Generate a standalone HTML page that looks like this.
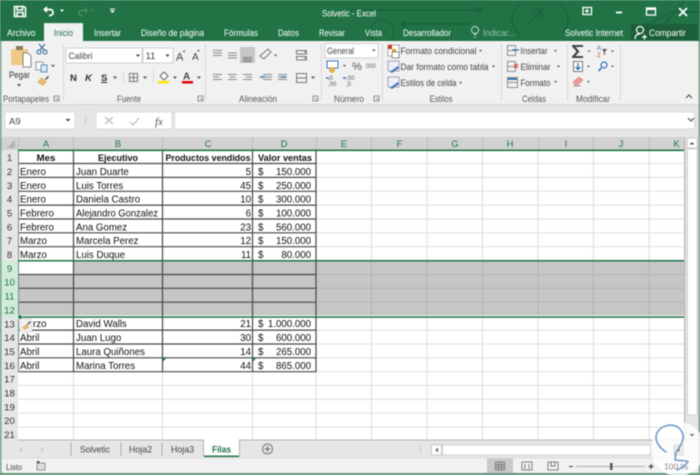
<!DOCTYPE html>
<html lang="es"><head><meta charset="utf-8"><title>Solvetic - Excel</title>
<style>
html,body{margin:0;padding:0;background:#e6e6e6;width:700px;height:475px;overflow:hidden}
svg{display:block;filter:blur(.4px)}
text{font-family:"Liberation Sans",sans-serif;font-size:9.6px;fill:#222}
.t text,.t{fill:#fff}
.c text{fill:#111;font-size:9.7px}
.h text{font-weight:bold;fill:#111;font-size:9.6px;text-anchor:middle}
.e text{text-anchor:end}
.n text{text-anchor:middle;fill:#333;font-size:9.6px}
.ch text{text-anchor:middle;fill:#217346;font-size:9.5px}
.l text{fill:#555;font-size:9px;text-anchor:middle}
</style></head><body>
<svg width="700" height="475" viewBox="0 0 700 475" xmlns="http://www.w3.org/2000/svg">
<rect width="700" height="475" fill="#e6e6e6"/>
<!-- title bar -->
<rect width="700" height="41" fill="#217346"/>
<g fill="none" stroke="#1b633b" stroke-width="1.5">
<path d="M350 10H480M400 24H470M520 4a18 18 0 0 0 0 30M560 4a18 18 0 0 1 0 30M528 24l14-14m-9 0h9v9M640 30l30-18h30M660 30l25-30"/><circle cx="382" cy="32" r="12"/><circle cx="404" cy="24" r="2"/><circle cx="480" cy="10" r="2"/>
</g>
<!-- QAT -->
<g fill="none" stroke="#fff" stroke-width="1.600"><path d="M14.500 6.500h9.500l1.500 1.500V16.500h-11zM17 6.500v3.500h5.500V6.500M17 16.500v-4h6v4"/><path d="M47 7l-2.500 2.500 2.500 2.500M44.500 9.500h5.500c4 0 4 6 0 6h-1" stroke-width="1.800"/></g>
<path d="M60 9.500h4l-2 2.500z" fill="#fff"/>
<g fill="none" stroke="#4c9068" stroke-width="1.400"><path d="M85 8l2 2.500-2 2.500M86.500 10.500h-5c-3.500 0-3.500 5 0 5h1"/></g>
<path d="M91 9.500h3l-1.500 2z" fill="#4c9068"/>
<path d="M110 8.500h5v1h-5zM110 10.500h5l-2.500 2.500z" fill="#fff"/>
<g class="t">
<text x="322" y="16.500" textLength="54" lengthAdjust="spacingAndGlyphs" fill="#fff">Solvetic - Excel</text>
<text x="7" y="36" textLength="28.500" lengthAdjust="spacingAndGlyphs">Archivo</text>
<text x="94" y="36" textLength="27" lengthAdjust="spacingAndGlyphs">Insertar</text>
<text x="141" y="36" textLength="63" lengthAdjust="spacingAndGlyphs">Diseño de página</text>
<text x="224" y="36" textLength="34" lengthAdjust="spacingAndGlyphs">Fórmulas</text>
<text x="278" y="36" textLength="21" lengthAdjust="spacingAndGlyphs">Datos</text>
<text x="319" y="36" textLength="26" lengthAdjust="spacingAndGlyphs">Revisar</text>
<text x="365" y="36" textLength="17" lengthAdjust="spacingAndGlyphs">Vista</text>
<text x="403" y="36" textLength="48" lengthAdjust="spacingAndGlyphs">Desarrollador</text>
<text x="565" y="36" textLength="58" lengthAdjust="spacingAndGlyphs">Solvetic Internet</text>
</g>
<text x="483" y="36" textLength="32" lengthAdjust="spacingAndGlyphs" style="fill:#9cc4ad">Indicar...</text>
<g fill="none" stroke="#b9d6c5" stroke-width="1"><circle cx="475" cy="30" r="3.500"/><path d="M473.500 34.500h3M474 37h2"/></g>
<!-- window buttons -->
<g fill="none" stroke="#fff" stroke-width="1.300"><rect x="583" y="7.500" width="8.500" height="7"/><path d="M585 11h4M587 9v4"/><rect x="646.500" y="8" width="9" height="7"/><path d="M646.500 9h9" stroke-width="2"/><path d="M679 8l8 8M687 8l-8 8" stroke-width="1.800"/><path d="M616 12.500h6" stroke-width="1.800"/></g>
<rect x="631" y="24" width="66" height="16" fill="#1b5e37"/>
<g fill="none" stroke="#fff" stroke-width="1.200"><circle cx="640" cy="30" r="3.500"/><path d="M635 39c0-3.500 2-5 5-5M642 37h5M644.500 34.500v5"/></g>
<text x="649" y="36" textLength="37" lengthAdjust="spacingAndGlyphs" style="fill:#fff">Compartir</text>
<!-- Ribbon -->
<rect x="0" y="41" width="700" height="63" fill="#f1f1f1"/>
<rect x="0" y="104" width="700" height="1" fill="#d4d4d4"/>
<path d="M44 41V24.500q0-1 1-1h37q1 0 1 1V41z" fill="#f1f1f1"/>
<rect x="44" y="23" width="39" height="1" fill="#d8e6dd"/>
<text x="54" y="36" textLength="19" lengthAdjust="spacingAndGlyphs" style="fill:#217346">Inicio</text>
<!-- separators -->
<g fill="#d8d8d8"><rect x="63" y="44" width="1" height="57"/><rect x="205" y="44" width="1" height="57"/><rect x="321" y="44" width="1" height="57"/><rect x="382" y="44" width="1" height="57"/><rect x="501" y="44" width="1" height="57"/><rect x="567" y="44" width="1" height="57"/><rect x="620" y="44" width="1" height="57"/></g>
<!-- group labels -->
<g class="l">
<text x="26" y="102" textLength="46" lengthAdjust="spacingAndGlyphs">Portapapeles</text>
<text x="129" y="102" textLength="24" lengthAdjust="spacingAndGlyphs">Fuente</text>
<text x="258" y="102" textLength="38" lengthAdjust="spacingAndGlyphs">Alineación</text>
<text x="349" y="102" textLength="30" lengthAdjust="spacingAndGlyphs">Número</text>
<text x="441" y="102" textLength="23" lengthAdjust="spacingAndGlyphs">Estilos</text>
<text x="534" y="102" textLength="24" lengthAdjust="spacingAndGlyphs">Celdas</text>
<text x="593" y="102" textLength="34" lengthAdjust="spacingAndGlyphs">Modificar</text>
</g>
<g fill="none" stroke="#777" stroke-width=".8"><path d="M54 96h5v5h-5zM198 96h5v5h-5zM313 96h5v5h-5zM374 96h5v5h-5zM56 98l2 2M200 98l2 2M315 98l2 2M376 98l2 2"/></g>
<!-- Clipboard -->
<path d="M11 49h6v-2h5v2h6v16H11z" fill="#f0c987"/><rect x="16" y="46" width="7" height="4" fill="#8a7a60"/>
<path d="M23 53h5l3 3v11h-8z" fill="#fff" stroke="#666" stroke-width=".8"/>
<text x="9" y="78" textLength="21" lengthAdjust="spacingAndGlyphs" style="fill:#333">Pegar</text>
<path d="M17 84h4l-2 2.500z" fill="#444"/>
<g fill="none" stroke="#2f5f8f" stroke-width="1"><circle cx="39" cy="52" r="2"/><circle cx="45" cy="52" r="2"/><path d="M40 50l5-6M44 50l-5-6"/></g>
<rect x="36" y="62" width="7" height="8" fill="#fff" stroke="#777" stroke-width=".8"/><rect x="41" y="65" width="6" height="7" fill="#dce8f4" stroke="#3b75ae" stroke-width=".8"/><path d="M51 65h4l-2 2z" fill="#444"/>
<path d="M37 82l5-5 5 5-4 4z" fill="#e3b96e"/><path d="M45 79l3-3 1 1-3 3z" fill="#444"/>
<!-- Font -->
<rect x="66" y="48" width="76" height="15" fill="#fff" stroke="#d0d0d0"/><rect x="143" y="48" width="30" height="15" fill="#fff" stroke="#d0d0d0"/>
<text x="68.500" y="59" textLength="24" lengthAdjust="spacingAndGlyphs" style="fill:#444">Calibri</text>
<text x="145.500" y="59" style="fill:#444">11</text>
<path d="M136 54.500h4l-2 2.500zM165.500 54.500h4l-2 2.500z" fill="#444"/>
<text x="176" y="60.500" style="font-size:11px;fill:#444">A</text><text x="192" y="60" style="font-size:10px;fill:#444">A</text>
<path d="M184 50l1.500 2h-3zM197 50h3l-1.500 2z" fill="#2f6eb0"/>
<text x="70" y="81" style="font-weight:bold;fill:#333">N</text><text x="85" y="81" style="font-weight:bold;font-style:italic;fill:#333">K</text><text x="101" y="81" style="font-weight:bold;fill:#333;text-decoration:underline">S</text>
<path d="M113 76.500h4l-2 2.500zM143 76.500h4l-2 2.500zM173 76.500h4l-2 2.500zM197 76.500h4l-2 2.500z" fill="#555"/>
<rect x="123" y="72" width="1" height="11" fill="#d8d8d8"/><rect x="153" y="70" width="1" height="13" fill="#d8d8d8"/>
<g fill="none" stroke="#777"><rect x="129.500" y="73.500" width="8" height="8"/><path d="M133.500 73.500v8M129.500 77.500h8"/></g>
<path d="M160 76l4-4 4 4-4 4z" fill="#fff" stroke="#666"/><rect x="158" y="81" width="11" height="2.500" fill="#ffe800"/>
<text x="183" y="79.500" style="font-size:10px;fill:#444;font-weight:bold">A</text><rect x="182" y="81" width="11" height="2.500" fill="#e00000"/>
<!-- Align -->
<g stroke="#8a8a8a" stroke-width="1"><path d="M213 50.500h9M213 53h9M213 55.500h9M228 53h9M228 55.500h9M228 58h9"/>
<path d="M213 74.500h9M213 77h6M213 79.500h9M228 74.500h9M230 77h5M228 79.500h9M243 74.500h9M246 77h6M243 79.500h9M263 74.500h9M263 77h9M263 79.500h9M278 74.500h9M278 77h9M278 79.500h9"/></g>
<rect x="240" y="47" width="15" height="16" fill="#c6c6c6"/><path d="M243 57.500h9M243 59.500h9M243 61.500h9" stroke="#777"/>
<path d="M260 56l8-7 3 3-7 7z" fill="none" stroke="#777"/><path d="M274 54.500h3l-1.500 2z" fill="#555"/>
<path d="M260 77h5M281 77h5" stroke="#3778b5" stroke-width="1.500"/>
<g fill="none" stroke="#777"><rect x="296.500" y="50.500" width="10" height="3.500"/><rect x="296.500" y="56.500" width="10" height="3.500"/><rect x="296.500" y="73.500" width="10" height="9"/><path d="M296.500 78h10M299 78h5"/></g>
<path d="M304 52h3M304 58h3" stroke="#3778b5"/><path d="M311 76.500h4l-2 2.500z" fill="#555"/>
<!-- Number -->
<rect x="325" y="43.500" width="53" height="14.500" fill="#fff" stroke="#d0d0d0"/>
<text x="327" y="54" textLength="27" lengthAdjust="spacingAndGlyphs" style="fill:#444">General</text>
<path d="M372 49.500h3.500l-1.700 2z" fill="#555"/>
<rect x="327" y="61" width="11" height="7" fill="#fff" stroke="#3778b5"/><circle cx="332" cy="70" r="3" fill="#e7b04f"/><path d="M343 65h3l-1.500 2z" fill="#555"/>
<text x="352" y="70" style="font-size:11px;fill:#555">%</text>
<text x="366" y="68" style="font-size:6px;fill:#666">000</text>
<text x="328" y="80" style="font-size:6px;fill:#555">,0</text><text x="328" y="86" style="font-size:6px;fill:#555">,00</text>
<text x="346" y="80" style="font-size:6px;fill:#555">,00</text><text x="346" y="86" style="font-size:6px;fill:#555">,0</text>
<path d="M326 78h3M343 78h3" stroke="#3778b5" stroke-width="1.500"/>
<!-- Styles -->
<text x="400.500" y="54" textLength="76" lengthAdjust="spacingAndGlyphs" style="fill:#444">Formato condicional</text>
<text x="400.500" y="70" textLength="88" lengthAdjust="spacingAndGlyphs" style="fill:#444">Dar formato como tabla</text>
<text x="400.500" y="86" textLength="56" lengthAdjust="spacingAndGlyphs" style="fill:#444">Estilos de celda</text>
<path d="M479 50h3l-1.500 2zM492 65.500h3l-1.500 2zM459 82h3l-1.500 2z" fill="#555"/>
<rect x="388" y="45" width="11" height="11" fill="#fff" stroke="#888" stroke-width=".7"/><rect x="388" y="45" width="4" height="4" fill="#c0392b"/><rect x="392" y="49" width="4" height="4" fill="#e6962e"/><rect x="392" y="52" width="7" height="6" fill="#fff" stroke="#666" stroke-width=".7"/>
<rect x="388" y="61" width="11" height="10" fill="#eef" stroke="#888" stroke-width=".7"/><path d="M390 72l8-6 1 2-7 5z" fill="#3778b5"/>
<rect x="388" y="77" width="11" height="10" fill="#eef" stroke="#888" stroke-width=".7"/><path d="M390 88l8-6 1 2-7 5z" fill="#3778b5"/>
<!-- Cells -->
<text x="520.500" y="54" textLength="27" lengthAdjust="spacingAndGlyphs" style="fill:#444">Insertar</text>
<text x="520.500" y="70" textLength="30" lengthAdjust="spacingAndGlyphs" style="fill:#444">Eliminar</text>
<text x="520.500" y="86" textLength="30" lengthAdjust="spacingAndGlyphs" style="fill:#444">Formato</text>
<path d="M554 50h3l-1.500 2zM557 65.500h3l-1.500 2zM554 81h3l-1.500 2z" fill="#555"/>
<g fill="none" stroke="#777" stroke-width=".8"><rect x="507.500" y="45.500" width="8" height="10"/><rect x="507.500" y="61.500" width="8" height="10"/><rect x="507.500" y="77.500" width="10" height="10"/><path d="M507.500 50.500h8M507.500 66.500h8M507.500 82.500h10"/></g>
<path d="M512 50h7" stroke="#3778b5" stroke-width="1.500"/><path d="M514 64l4 4M518 64l-4 4" stroke="#d8402d" stroke-width="1.200"/><rect x="508" y="78" width="9" height="2" fill="#3778b5"/>
<!-- Edit -->
<path d="M572 45h11v2h-7.500l4 4.500-4 4.500H583v2h-11v-1.500l4.500-5-4.500-5z" fill="#444"/>
<path d="M587.500 50.500h3l-1.500 2zM587 65.500h3l-1.500 2zM587 81h3l-1.500 2zM611 50.500h3l-1.500 2zM611 65.500h3l-1.500 2z" fill="#666"/>
<text x="597" y="50" style="font-size:6px;fill:#2f6eb0">A</text><text x="597" y="57" style="font-size:6px;fill:#d8402d">Z</text><path d="M602 49h5l-2 3v3h-1v-3z" fill="#555"/>
<rect x="573.500" y="61.500" width="9" height="10" fill="#fff" stroke="#777"/><path d="M578 63v6m-2.500-2l2.500 2.500 2.500-2.500" stroke="#2f6eb0" fill="none" stroke-width="1.300"/>
<circle cx="604" cy="65" r="3" fill="none" stroke="#2f6eb0" stroke-width="1.200"/><path d="M601.500 68l-3 3" stroke="#2f6eb0" stroke-width="1.500"/>
<path d="M573 82l6-5 4 3-5 5h-3z" fill="#e99" stroke="#c66" stroke-width=".5"/><path d="M573 86h8" stroke="#999"/>
<path d="M686 98l3-3 3 3" fill="none" stroke="#555" stroke-width="1.200"/>
<!-- Formula bar -->
<rect x="5" y="112" width="70" height="17" fill="#fff" stroke="#dcdcdc"/>
<text x="9" y="124.500" style="fill:#444">A9</text><path d="M65.500 119h5l-2.500 2.500z" fill="#444"/>
<g fill="#aaa"><rect x="85" y="117" width="1" height="1.200"/><rect x="85" y="120" width="1" height="1.200"/><rect x="85" y="123" width="1" height="1.200"/></g>
<rect x="96" y="112" width="76" height="17" fill="#fff" stroke="#dcdcdc"/>
<rect x="174.500" y="112" width="520" height="17" fill="#fff" stroke="#dcdcdc"/>
<path d="M105 117l8 7M113 117l-8 7M130 122l3 3 6-7" stroke="#bbb" stroke-width="1.200" fill="none"/>
<text x="155" y="125" style="font-family:'Liberation Serif',serif;font-style:italic;font-size:11px;fill:#555">fx</text>
<path d="M688 118l3 3 3-3" fill="none" stroke="#555" stroke-width="1.200"/>
<!-- Grid -->
<rect x="18" y="150" width="666" height="290" fill="#fff"/>
<rect x="0" y="137" width="684" height="13" fill="#d2d2d2"/>
<rect x="0" y="150" width="18" height="290" fill="#e6e6e6"/>
<path d="M7 148l8-8v8z" fill="#b4b4b4"/>
<rect x="1.500" y="261" width="16.500" height="56" fill="#d0ecd9"/>
<g fill="#bdbdbd"><rect x="18" y="137" width="1" height="13"/><rect x="73" y="137" width="1" height="13"/><rect x="162" y="137" width="1" height="13"/><rect x="252" y="137" width="1" height="13"/><rect x="316" y="137" width="1" height="13"/><rect x="371" y="137" width="1" height="13"/><rect x="427" y="137" width="1" height="13"/><rect x="482" y="137" width="1" height="13"/><rect x="538" y="137" width="1" height="13"/><rect x="593" y="137" width="1" height="13"/><rect x="649" y="137" width="1" height="13"/></g>
<!-- gridlines -->
<g stroke="#e2e2e2" stroke-width="1.200">
<path d="M316 163.500H684M316 177.400H684M316 191.300H684M316 205.100H684M316 219H684M316 232.800H684M316 246.700H684M316 330.100H684M316 344H684M316 357.800H684M316 371.700H684M18 385.500H684M18 399.400H684M18 413.200H684M18 427.100H684"/>
<path d="M371.500 150V261M371.500 317V440M427 150V261M427 317V440M482.500 150V261M482.500 317V440M538 150V261M538 317V440M593.500 150V261M593.500 317V440M649 150V261M649 317V440M73.500 372V440M162.500 372V440M252.500 372V440M316 372V440"/>
</g>
<!-- selected -->
<rect x="19" y="261" width="665" height="55" fill="#c6c6c6"/>
<rect x="19" y="261" width="54" height="13.500" fill="#fff"/>
<g stroke="#b3b3b3" stroke-width="1"><path d="M316 274.500H684M316 288.300H684M316 302.200H684M371.500 261V316M427 261V316M482.500 261V316M538 261V316M593.500 261V316M649 261V316"/></g>
<rect x="18" y="315.300" width="666" height="1" fill="#fff"/>
<!-- cell borders -->
<g stroke="#474747" stroke-width="1.200">
<path d="M18 163.500H316M18 177.400H316M18 191.300H316M18 205.100H316M18 219H316M18 232.800H316M18 246.700H316M18 274.500H316M18 288.300H316M18 302.200H316M18 330.100H316M18 344H316M18 357.800H316M18 371.700H316"/>
<path d="M73.500 150V372M162.500 150V372M252.500 150V372M316 150V372"/>
</g>
<path d="M18.500 150V372" stroke="#6a8f78" stroke-width="1"/>
<rect x="18" y="149.500" width="666" height="1.600" fill="#217346"/>
<rect x="18" y="260" width="666" height="1.500" fill="#217346"/>
<rect x="18" y="316.300" width="666" height="1.500" fill="#217346"/>
<rect x="18" y="315" width="4" height="4" fill="#217346" stroke="#fff" stroke-width=".5"/>
<path d="M163 358.500h3l-3 3zM253 358.500h3l-3 3z" fill="#0a8a2c"/>
<!-- col headers -->
<g class="ch"><text x="46" y="147">A</text><text x="118" y="147">B</text><text x="208" y="147">C</text><text x="284" y="147">D</text><text x="344" y="147">E</text><text x="399.500" y="147">F</text><text x="455" y="147">G</text><text x="510" y="147">H</text><text x="566" y="147">I</text><text x="621" y="147">J</text><text x="676.500" y="147">K</text></g>
<!-- row headers -->
<g class="n"><text x="9.500" y="161">1</text><text x="9.500" y="174.900">2</text><text x="9.500" y="188.800">3</text><text x="9.500" y="202.600">4</text><text x="9.500" y="216.500">5</text><text x="9.500" y="230.300">6</text><text x="9.500" y="244.200">7</text><text x="9.500" y="258">8</text>
<text x="9.500" y="271.900" style="fill:#217346">9</text><text x="9.500" y="285.700" style="fill:#217346">10</text><text x="9.500" y="299.600" style="fill:#217346">11</text><text x="9.500" y="313.400" style="fill:#217346">12</text>
<text x="9.500" y="327.300">13</text><text x="9.500" y="341.100">14</text><text x="9.500" y="355">15</text><text x="9.500" y="368.800">16</text><text x="9.500" y="382.700">17</text><text x="9.500" y="396.500">18</text><text x="9.500" y="410.400">19</text><text x="9.500" y="424.200">20</text><text x="9.500" y="438.100">21</text></g>
<!-- header cells -->
<g class="h"><text x="46" y="161" textLength="19" lengthAdjust="spacingAndGlyphs">Mes</text><text x="118" y="161" textLength="40" lengthAdjust="spacingAndGlyphs">Ejecutivo</text><text x="208" y="161" textLength="85" lengthAdjust="spacingAndGlyphs">Productos vendidos</text><text x="285" y="161" textLength="54" lengthAdjust="spacingAndGlyphs">Valor ventas</text></g>
<!-- cells -->
<g class="c">
<text x="20" y="174.900">Enero</text><text x="20" y="188.800">Enero</text><text x="20" y="202.600">Enero</text><text x="20" y="216.500">Febrero</text><text x="20" y="230.300">Febrero</text><text x="20" y="244.200">Marzo</text><text x="20" y="258">Marzo</text>
<text x="33" y="327.200">rzo</text><text x="20" y="341.100">Abril</text><text x="20" y="354.900">Abril</text><text x="20" y="368.800">Abril</text>
<text x="76" y="174.900">Juan Duarte</text><text x="76" y="188.800">Luis Torres</text><text x="76" y="202.600">Daniela Castro</text><text x="76" y="216.500" textLength="82" lengthAdjust="spacingAndGlyphs">Alejandro Gonzalez</text><text x="76" y="230.300">Ana Gomez</text><text x="76" y="244.200">Marcela Perez</text><text x="76" y="258">Luis Duque</text>
<text x="76" y="327.200">David Walls</text><text x="76" y="341.100">Juan Lugo</text><text x="76" y="354.900">Laura Quiñones</text><text x="76" y="368.800">Marina Torres</text>
<text x="258" y="174.900">$</text><text x="258" y="188.800">$</text><text x="258" y="202.600">$</text><text x="258" y="216.500">$</text><text x="258" y="230.300">$</text><text x="258" y="244.200">$</text><text x="258" y="258">$</text><text x="258" y="327.200">$</text><text x="258" y="341.100">$</text><text x="258" y="354.900">$</text><text x="258" y="368.800">$</text>
</g>
<g class="c e">
<text x="251" y="174.900">5</text><text x="251" y="188.800">45</text><text x="251" y="202.600">10</text><text x="251" y="216.500">6</text><text x="251" y="230.300">23</text><text x="251" y="244.200">12</text><text x="251" y="258">11</text><text x="251" y="327.200">21</text><text x="251" y="341.100">30</text><text x="251" y="354.900">14</text><text x="251" y="368.800">44</text>
<text x="311" y="174.900">150.000</text><text x="311" y="188.800">250.000</text><text x="311" y="202.600">300.000</text><text x="311" y="216.500">100.000</text><text x="311" y="230.300">560.000</text><text x="311" y="244.200">150.000</text><text x="311" y="258">80.000</text><text x="311" y="327.200">1.000.000</text><text x="311" y="341.100">600.000</text><text x="311" y="354.900">265.000</text><text x="311" y="368.800">865.000</text>
</g>
<!-- paste options -->
<rect x="20" y="319" width="12" height="13" fill="#f2f2f2" stroke="#d0d0d0" stroke-width=".7"/>
<path d="M21.500 328l5-4 3 3-4 3z" fill="#e3b96e"/><path d="M27 324l3-3 1 1-3 3z" fill="#555"/>
<!-- vertical scrollbar -->
<rect x="684" y="137" width="16" height="303" fill="#e6e6e6"/>
<rect x="684" y="137" width="1.500" height="303" fill="#bdbdbd"/>
<rect x="687.500" y="138" width="9.500" height="10" fill="#fff" stroke="#bbb" stroke-width=".7"/>
<path d="M689.500 144.500h5l-2.500-2.500z" fill="#555"/>
<!-- sheet tabs -->
<rect x="0" y="440" width="700" height="18" fill="#e6e6e6"/>
<rect x="18" y="439.500" width="682" height="1" fill="#b5b5b5"/>
<path d="M22 448l-2 2 2 2M41 448l2 2-2 2" fill="none" stroke="#c0c0c0"/>
<g fill="#a8a8a8"><rect x="70.500" y="443" width="1" height="13"/><rect x="120.500" y="443" width="1" height="13"/><rect x="161.500" y="443" width="1" height="13"/></g>
<text x="80" y="452.500" textLength="30" lengthAdjust="spacingAndGlyphs" style="fill:#444">Solvetic</text>
<text x="129" y="452.500" textLength="23" lengthAdjust="spacingAndGlyphs" style="fill:#444">Hoja2</text>
<text x="171" y="452.500" textLength="23" lengthAdjust="spacingAndGlyphs" style="fill:#444">Hoja3</text>
<rect x="203.500" y="439.500" width="36" height="17" fill="#fff"/><rect x="203" y="439.500" width="1" height="17" fill="#b5b5b5"/><rect x="239" y="439.500" width="1" height="17" fill="#b5b5b5"/>
<rect x="204" y="455.500" width="35" height="1.500" fill="#217346"/>
<text x="212" y="452.500" textLength="19" lengthAdjust="spacingAndGlyphs" style="fill:#217346;font-weight:bold">Filas</text>
<circle cx="267.500" cy="449" r="5" fill="none" stroke="#777"/><path d="M264.500 449h6M267.500 446v6" stroke="#666"/>
<g fill="#aaa"><rect x="420" y="446" width="1" height="1.200"/><rect x="420" y="449" width="1" height="1.200"/><rect x="420" y="452" width="1" height="1.200"/></g>
<rect x="431.500" y="445" width="10" height="10" fill="#fff" stroke="#bbb" stroke-width=".7"/><path d="M438 447.500v5l-2.500-2.500z" fill="#555"/>
<rect x="442.500" y="445" width="208" height="10" fill="#fff" stroke="#c4c4c4" stroke-width=".7"/>
<!-- status bar -->
<rect x="0" y="458" width="700" height="15" fill="#f1f1f1"/>
<rect x="0" y="457.500" width="700" height="1" fill="#dcdcdc"/>
<text x="6" y="470" textLength="16" lengthAdjust="spacingAndGlyphs" style="font-size:8.500px;fill:#444">Listo</text>
<rect x="37" y="463" width="8" height="7" fill="#ddd" stroke="#777" stroke-width=".7"/><rect x="37" y="461" width="2.500" height="2.500" fill="#555"/>
<rect x="487" y="458.500" width="26" height="14.500" fill="#c9c9c9"/>
<g fill="none" stroke="#777" stroke-width=".9"><rect x="495.500" y="462" width="9" height="8"/><path d="M495.500 465h9M495.500 467.500h9M498.500 462v8M501.500 462v8"/><rect x="522" y="462" width="10" height="8"/><path d="M525 464v5M529 464v5"/><rect x="548" y="462" width="10" height="8"/><path d="M551 462v4h4v-4"/></g>
<path d="M569 466.500h4" stroke="#555" stroke-width="1.200"/><path d="M576 466.500h69" stroke="#aaa"/><rect x="610" y="463" width="2.500" height="7" fill="#555"/><path d="M648.500 466.500h5M651 464v5" stroke="#444" stroke-width="1.200"/>
<rect x="0" y="473" width="700" height="2" fill="#217346" opacity=".7"/>
<rect x="0" y="41" width="1.500" height="434" fill="#217346" opacity=".6"/><rect x="698.500" y="41" width="1.500" height="434" fill="#217346" opacity=".6"/>
<!-- watermark -->
<circle cx="678" cy="449" r="27" fill="#fff" fill-opacity=".82"/>
<text x="664" y="469.500" style="font-size:8.500px;fill:#888">100 %</text>
<rect x="687.500" y="149" width="9.500" height="266" fill="#fff" stroke="#c4c4c4" stroke-width=".7"/>
<path d="M689.500 434l2.500 2.500 2.500-2.500z" fill="#777"/>
<rect x="674" y="445" width="9" height="10" fill="#eee" stroke="#ccc" stroke-width=".7"/><path d="M678 447.500v5l2.500-2.500z" fill="#888"/>
<path d="M666 452C658 447 654 439 657 433C660 427 668 424 674 425.500C680 427 684 433 683 439C682 445 678 449 676 452C675 455 676 457 675 460C679 461 684 460 688 461.500C686 465 682 468 677 470" fill="none" stroke="#6f9bc8" stroke-width="1.600" stroke-linecap="round" stroke-linejoin="round"/>
</svg>
</body></html>
